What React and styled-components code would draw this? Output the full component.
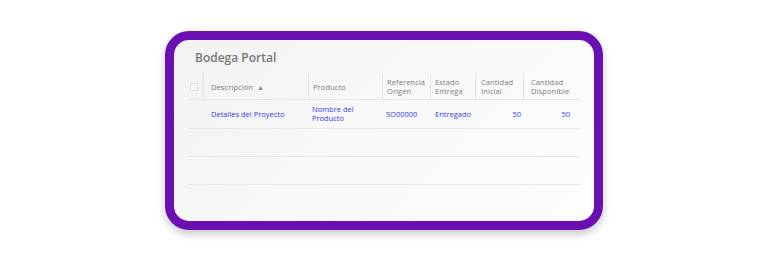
import React from 'react';
// styling
import styled, { createGlobalStyle } from 'styled-components';

const columns = [
    { key: 'desc', label: ['Descripción'], sort: true, pad: '7px' },
    { key: 'prod', label: ['Producto'] },
    { key: 'ref', label: ['Referencia', 'Origen'] },
    { key: 'estado', label: ['Estado', 'Entrega'] },
    { key: 'inicial', label: ['Cantidad', 'Inicial'], pad: '5px' },
    { key: 'disp', label: ['Cantidad', 'Disponible'], pad: '7px' },
];

const rows = [
    {
        id: 1,
        desc: 'Detalles del Proyecto',
        prod: ['Nombre del', 'Producto'],
        ref: 'SO00000',
        estado: 'Entregado',
        inicial: '50',
        disp: '50',
    },
];

function App() {
    return (
        <>
            <GlobalStyle />
            <Page>
                <Frame>
                    <Title>Bodega Portal</Title>
                    <Table>
                        <HeadRow>
                            <HeadCell>
                                <Check />
                            </HeadCell>
                            {columns.map((col) => (
                                <HeadCell key={col.key} $divider $pad={col.pad}>
                                    <span>
                                        {col.label.map((line) => (
                                            <Line key={line}>{line}</Line>
                                        ))}
                                    </span>
                                    {col.sort && <SortArrow>▲</SortArrow>}
                                </HeadCell>
                            ))}
                        </HeadRow>
                        {rows.map((row) => (
                            <BodyRow key={row.id}>
                                <Cell />
                                <Cell $pad="8px">{row.desc}</Cell>
                                <Cell>
                                    <span>
                                        {row.prod.map((line) => (
                                            <Line key={line}>{line}</Line>
                                        ))}
                                    </span>
                                </Cell>
                                <Cell>{row.ref}</Cell>
                                <Cell $pad="5px">{row.estado}</Cell>
                                <Cell $right $padRight="2px">{row.inicial}</Cell>
                                <Cell $right $padRight="10px">{row.disp}</Cell>
                            </BodyRow>
                        ))}
                        <EmptyRow />
                        <EmptyRow />
                    </Table>
                </Frame>
            </Page>
        </>
    );
};

const GlobalStyle = createGlobalStyle`
    * {
        box-sizing: border-box;
    }
    body {
        margin: 0;
        background: #ffffff;
        font-family: "Open Sans", "Liberation Sans", sans-serif;
    }
`;

const Page = styled.div`
    width: 768px;
    height: 260px;
    display: flex;
    align-items: center;
    justify-content: center;
`;

const Frame = styled.div`
    width: 438px;
    height: 199px;
    margin-top: 1px;
    border: 9px solid #6a0fb2;
    border-radius: 24px;
    background: linear-gradient(135deg, #f2f2f2 0%, #f8f8f8 45%, #fdfdfd 100%);
    box-shadow: 0 4px 9px rgba(0, 0, 0, 0.22);
    padding: 10px 14px 0 14px;
    display: flex;
    flex-direction: column;
`;

const Title = styled.h1`
    margin: 0 0 8px 7px;
    font-size: 12px;
    line-height: 16px;
    font-weight: 600;
    color: #777777;
`;

const Table = styled.div`
    display: grid;
    grid-template-columns: 15px 105px 74px 48px 45px 48px 57px;
    width: 392px;
`;

const HeadRow = styled.div`
    display: contents;
`;

const HeadCell = styled.div`
    height: 26px;
    display: flex;
    align-items: center;
    padding-left: ${(p) => p.$pad || '4px'};
    padding-top: 1px;
    border-left: ${(p) => (p.$divider ? '1px solid #e4e4e4' : 'none')};
    border-bottom: 1px solid #e6e6e6;
    font-size: 7.5px;
    line-height: 9px;
    color: #7a7a7a;
    letter-spacing: 0.1px;
`;

const Line = styled.span`
    display: block;
    white-space: nowrap;
`;

const SortArrow = styled.span`
    margin-left: 4px;
    font-size: 7px;
    color: #8a8a8a;
`;

const Check = styled.div`
    width: 8px;
    height: 8px;
    margin-left: -2px;
    border: 1px solid #dcdcdc;
    border-radius: 1px;
    background: #fafafa;
`;

const BodyRow = styled.div`
    display: contents;
`;

const Cell = styled.div`
    height: 29px;
    display: flex;
    align-items: center;
    justify-content: ${(p) => (p.$right ? 'flex-end' : 'flex-start')};
    padding-left: ${(p) => p.$pad || '4px'};
    padding-right: ${(p) => p.$padRight || '0'};
    border-bottom: 1px solid #e6e6e6;
    font-size: 7.5px;
    line-height: 9px;
    color: #3838ef;
    white-space: nowrap;
`;

const EmptyRow = styled.div`
    grid-column: 1 / -1;
    height: 28px;
    border-bottom: 1px solid #e6e6e6;
`;

export default App
